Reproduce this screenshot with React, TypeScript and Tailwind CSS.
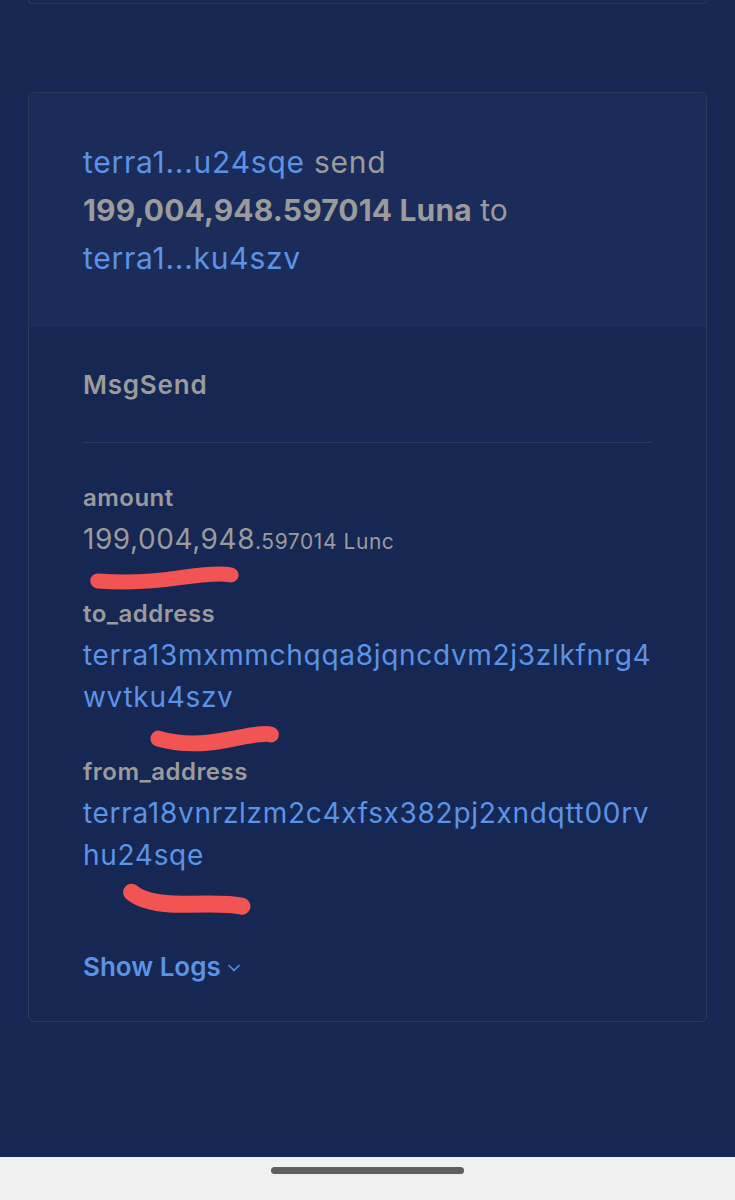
import { ChevronDown } from "lucide-react";

const font = { fontFamily: '"Inter", "Liberation Sans", sans-serif' };

interface FieldProps {
  label: string;
  children: React.ReactNode;
}

const Field = ({ label, children }: FieldProps) => {
  return (
    <div className="flex flex-col">
      <div className="text-[24px] leading-[32px] font-semibold tracking-[0.02em] text-[#9b9b9b]">
        {label}
      </div>
      <div className="mt-[4px] text-[28px] leading-[42px]">{children}</div>
    </div>
  );
};

// addresses are shown already wrapped the way the explorer lays them out
const Address = ({ lines }: { lines: string[] }) => {
  return (
    <div className="text-[#5b93e6] whitespace-nowrap tracking-[0.025em]">
      {lines.map((l) => (
        <div key={l}>{l}</div>
      ))}
    </div>
  );
};

// red marker strokes drawn over the message card
const Scribbles = () => {
  return (
    <svg
      className="absolute inset-0 w-full h-full pointer-events-none"
      viewBox="0 0 680 930"
      preserveAspectRatio="none"
      fill="none"
    >
      <g stroke="#f25353" strokeLinecap="round" strokeLinejoin="round">
        <path d="M69 489 Q 110 492 150 486 T 203 483" strokeWidth="15" />
        <path d="M130 647 Q 160 656 200 648 T 243 643" strokeWidth="16" />
        <path d="M103 801 Q 118 814 160 813 T 214 815" strokeWidth="17" />
      </g>
    </svg>
  );
};

export default function App() {
  return (
    <div className="min-h-[1200px] bg-[#172753] flex flex-col" style={font}>
      <div className="px-[28px]">
        <div className="h-[4px] border-x border-b border-[#2d3a56] rounded-b-md" />
      </div>

      <div className="relative mt-[88px] mx-[28px] border border-[#2d3a56] rounded-md overflow-hidden">
        <div className="bg-[#1b2c5a] px-[54px] py-[45px] text-[30px] leading-[48px] tracking-[0.025em] text-[#9b9b9b]">
          <span className="text-[#5b93e6]">terra1...u24sqe</span> send
          <br />
          <span className="font-bold tracking-[0.005em]">199,004,948.597014 Luna</span>
          <span className="tracking-normal"> to</span>
          <br />
          <span className="text-[#5b93e6]">terra1...ku4szv</span>
        </div>

        <div className="px-[54px] pt-[42px] pb-[38px]">
          <div className="pb-[41px] border-b border-[#2f3b55] text-[26px] leading-[32px] font-semibold tracking-[0.03em] text-[#9b9b9b]">
            MsgSend
          </div>

          <div className="mt-[39px] flex flex-col gap-[38px]">
            <Field label="amount">
              <span className="text-[#9b9b9b] tracking-[0.02em]">
                199,004,948
                <span className="text-[21px] leading-none">.597014 Lunc</span>
              </span>
            </Field>
            <Field label="to_address">
              <Address lines={["terra13mxmmchqqa8jqncdvm2j3zlkfnrg4", "wvtku4szv"]} />
            </Field>
            <Field label="from_address">
              <Address lines={["terra18vnrzlzm2c4xfsx382pj2xndqtt00rv", "hu24sqe"]} />
            </Field>
          </div>

          <button className="mt-[75px] flex items-center gap-[3px] text-[26px] leading-[32px] font-semibold text-[#5b93e6]">
            Show Logs
            <ChevronDown size={20} strokeWidth={2} className="mt-[2px]" />
          </button>
        </div>

        <Scribbles />
      </div>

      <div className="flex-1" />

      <div className="h-[43px] bg-[#f0f0f0] flex justify-center">
        <div className="mt-[10px] w-[193px] h-[7px] rounded-full bg-[#5f5f5f]" />
      </div>
    </div>
  );
}
